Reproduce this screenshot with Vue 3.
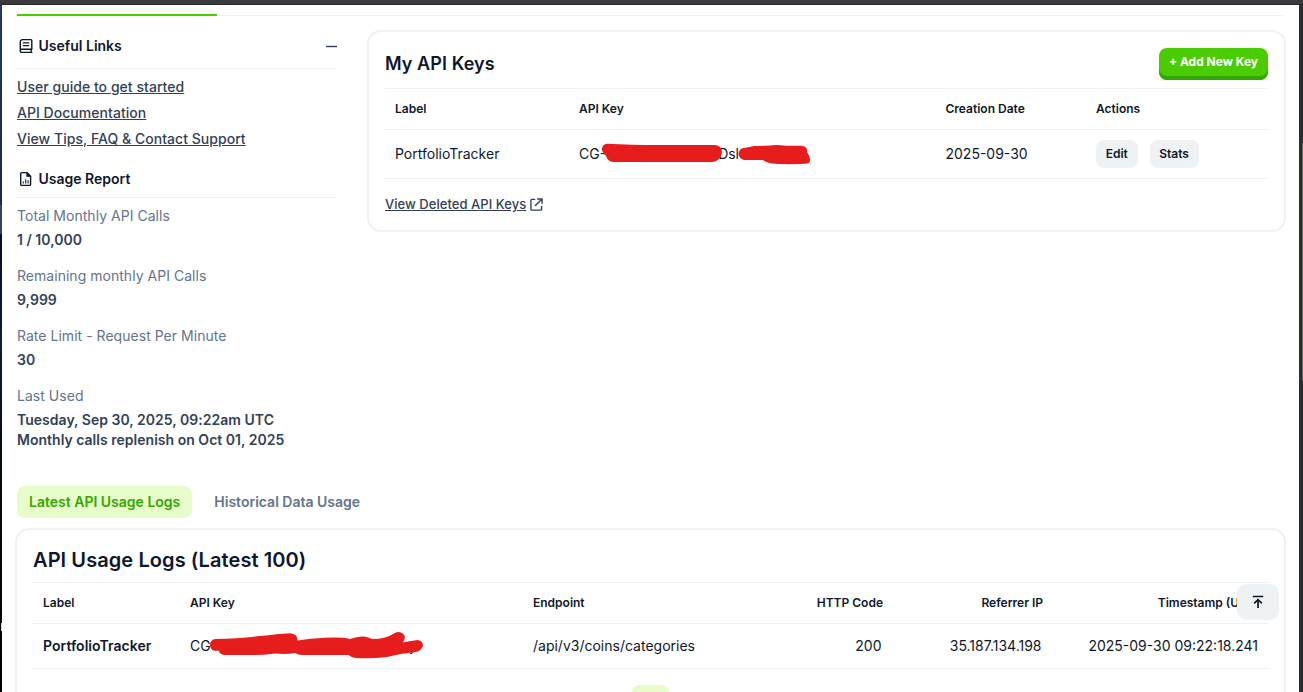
<script setup>
const links = ['User guide to get started', 'API Documentation', 'View Tips, FAQ & Contact Support']
const stats = [
  { label: 'Total Monthly API Calls', lines: ['1 / 10,000'] },
  { label: 'Remaining monthly API Calls', lines: ['9,999'] },
  { label: 'Rate Limit - Request Per Minute', lines: ['30'] },
  { label: 'Last Used', lines: ['Tuesday, Sep 30, 2025, 09:22am UTC', 'Monthly calls replenish on Oct 01, 2025'] },
]
</script>

<template>
  <div class="window">
    <div class="topbar"></div>
    <div class="edge-left"><i></i></div>
    <main class="page">
      <div class="progress"><div class="progress-fill"></div></div>

      <div class="upper">
        <aside class="side">
          <div class="side-head first">
            <svg class="ico" width="16" height="16" viewBox="0 0 16 16" fill="none" stroke="#0f172a" stroke-width="1.4" stroke-linecap="round" stroke-linejoin="round">
              <path d="M13.8 11.2V2.6a1 1 0 0 0-1-1H4.3a2 2 0 0 0-2 2v8.6M13.8 11.2H3.8a1.5 1.5 0 0 0 0 3.2h10M13.2 11.4v2.8M5.4 4.9h5.2M5.4 7.6h5.2" />
            </svg>
            <span>Useful Links</span>
            <svg class="minus" width="12" height="16" viewBox="0 0 12 16"><path d="M1 8.500h11" stroke="#334155" stroke-width="1.4" /></svg>
          </div>
          <nav class="links"><a v-for="l in links" :key="l">{{ l }}</a></nav>
          <div class="side-head second">
            <svg class="ico" width="16" height="16" viewBox="0 0 16 16" fill="none" stroke="#0f172a" stroke-width="1.4" stroke-linejoin="round">
              <path d="M8.9 1.6H3.7a1 1 0 0 0-1 1v10.8a1 1 0 0 0 1 1h7.9a1 1 0 0 0 1-1V5.3L8.9 1.6Z" />
              <path d="M8.7 1.6v3.9h3.9Z" fill="#0f172a" stroke-width=".6" />
              <path d="M5.3 12.500v-2M7.7 12.500V8.200M10.1 12.500V9.300" stroke-width="1.1" />
            </svg>
            <span>Usage Report</span>
          </div>
          <dl class="stats">
            <div v-for="s in stats" :key="s.label" class="stat">
              <dt>{{ s.label }}</dt>
              <dd v-for="t in s.lines" :key="t">{{ t }}</dd>
            </div>
          </dl>
        </aside>

        <section class="card keys">
          <header>
            <h2>My API Keys</h2>
            <button class="add">+ Add New Key</button>
          </header>
          <div class="row head keys-grid">
            <span>Label</span><span>API Key</span><span>Creation Date</span><span>Actions</span>
          </div>
          <div class="row body keys-grid">
            <span>PortfolioTracker</span>
            <span class="masked">CG-<b class="gap-a"></b>Dsl
              <svg class="scribble" width="260" height="50" viewBox="0 0 260 50" fill="#e71d1d">
                <path d="M37 13.7Q60 15 90 15H145Q152 15.500 152 23Q149 32 142 32H44Q38 32 36 26Q31 21 32 18Q33 14 37 13.700Z" />
                <path d="M174 18Q180 17 184 16Q190 16 200 15.600Q206 14.500 216 15.800H232Q238 17 237 22Q242 29 239 33Q236 34 230 34Q212 34.500 202 33.500Q195 32 193 30H174Q168 28 168.500 23Q170 18 174 18Z" />
              </svg>
            </span>
            <span>2025-09-30</span>
            <span class="actions"><button>Edit</button><button>Stats</button></span>
          </div>
          <div class="deleted">
            <a>View Deleted API Keys</a>
            <svg width="13" height="13" viewBox="0 0 14 14" fill="none" stroke="#334155" stroke-width="1.5" stroke-linecap="round" stroke-linejoin="round">
              <path d="M5 1.500H2Q1 1.500 1 2.500V12Q1 13 2 13H11.500Q12.500 13 12.500 12V9M8.200 1H13V5.800M13 1 5.800 8.200" />
            </svg>
          </div>
        </section>
      </div>

      <div class="tabs"><span class="tab on">Latest API Usage Logs</span><span class="tab">Historical Data Usage</span></div>

      <section class="card logs">
        <h2>API Usage Logs (Latest 100)</h2>
        <div class="row head logs-grid">
          <span>Label</span><span>API Key</span><span>Endpoint</span><span class="num">HTTP Code</span><span class="num">Referrer IP</span><span class="num">Timestamp (UTC)</span>
        </div>
        <div class="row body logs-grid">
          <span class="strong">PortfolioTracker</span>
          <span class="masked">CG<b class="gap-b"></b>y
            <svg class="scribble wide" width="260" height="50" viewBox="0 0 260 50" fill="#e71d1d">
              <path d="M35 19Q60 18.500 80 16Q98 14 110 13.200Q118 14 117.500 20.500Q130 18.500 145 17.800Q162 17 170 19Q178 16 184 16.500Q189 17 192 19Q206 19 213 14Q217 11 221 12.500Q226 15 224.500 19L223 22.500Q231 20.500 238 20Q243 21 243 26Q241 31 236 32Q222 33 207 37Q190 39 176 38Q170 37 169 35H122Q117 34.500 116 33Q105 34.500 95 33.500Q80 35.500 68 35H44Q39 34 39 30.800H34Q30 29 30 25Q30 20 35 19Z" />
            </svg>
          </span>
          <span>/api/v3/coins/categories</span><span class="num">200</span><span class="num">35.187.134.198</span><span class="num last">2025-09-30 09:22:18.241</span>
        </div>
        <div class="pager"></div>
      </section>
    </main>
    <div class="edge-right"></div>
    <button class="to-top" aria-label="Back to top">
      <svg width="14" height="16" viewBox="0 0 14 16" fill="none" stroke="#0f172a" stroke-width="1.7"><path d="M1.800 2.500h10.400M7 14V5.800M3.200 9.400l3.800-3.800 3.800 3.800" /></svg>
    </button>
  </div>
</template>

<style>
body { margin: 0; overflow: hidden; }
</style>
<style scoped>
* { box-sizing: border-box; }
.window {
  position: relative; width: 1303px; height: 692px; overflow: hidden; background: #fff;
  display: grid; grid-template: 5px 687px / 2px 1297px 4px;
  font-family: Inter, "Liberation Sans", sans-serif; font-size: 14px; line-height: 20px; color: #0f172a;
}
button { font: inherit; border: 0; margin: 0; padding: 0; color: inherit; }
.topbar { grid-column: 1 / 4; background: #3a393e; border-bottom: 1px solid #2b2a2e; }
.edge-left { padding-top: 618px; background: linear-gradient(#22376b, #192752 200px, #39435f 200px, #39435f 228px, #060d25 230px, #101a30 340px, #040d12 450px, #030704 600px, #000); }
.edge-left i { display: block; width: 1px; height: 8px; margin-left: 1px; background: #ddd; }
.edge-right { background: linear-gradient(#2b2c2e, #2b2c2e) 0 0 / 3px 100% no-repeat, linear-gradient(#2b2c2e 138px, #66676a 138px, #66676a 376px, #2b2c2e 376px); }
.page { padding: 9px 13px 0; overflow: hidden; }
.progress { height: 2px; margin: 0 2px; background: linear-gradient(transparent 1px, #f0f1f2 1px); }
.progress-fill { width: 200px; height: 2px; background: #4bcc00; }
.upper { display: flex; justify-content: space-between; height: 470px; }
.side { width: 320px; margin-left: 2px; }
.side-head { display: flex; align-items: center; border-bottom: 1px solid #eff2f5; font-weight: 600; }
.side-head.first { height: 53px; padding-top: 8px; }
.side-head.second { height: 30px; padding-bottom: 8px; }
.ico { margin: 0 4.5px 0 1px; flex: none; }
.minus { margin-left: auto; }
.links { display: flex; flex-direction: column; align-items: flex-start; gap: 6px; padding: 8px 0 19px; }
.links a, .deleted a { font-weight: 540; color: #334155; text-decoration: underline; letter-spacing: .04px; }
.deleted a { font-size: 13px; }
.stats { margin: 0; padding-top: 8px; display: flex; flex-direction: column; gap: 16px; }
dt { color: #64748b; margin-bottom: 4px; letter-spacing: .03px; }
dd { margin: 0; font-weight: 600; color: #334155; letter-spacing: .02px; }
.card { border: 2px solid #eff2f5; border-radius: 14px; padding: 0 16px; }
h2 { margin: 0; font-weight: 600; letter-spacing: .08px; }
.keys { width: 919px; height: 202px; margin-top: 14px; }
.keys header { display: flex; justify-content: space-between; height: 56px; padding-top: 16px; }
.keys h2 { font-size: 18px; line-height: 32px; }
.add { width: 109px; height: 32px; padding-bottom: 4px; border-radius: 8px; background: #4bcc00; box-shadow: inset 0 -4px #32a900; color: #fff; font-size: 12px; font-weight: 700; line-height: 28px; }
.row { display: grid; align-items: center; border-top: 1px solid #eff2f5; white-space: nowrap; }
.row.head { height: 41px; font-size: 12px; font-weight: 600; }
.row > span { padding-left: 10px; }
.row.body { border-bottom: 1px solid #eff2f5; }
.keys .body { height: 50px; }
.keys-grid { grid-template-columns: 184px 366.5px 150.5px 1fr; }
.actions { display: flex; gap: 12px; }
.actions button { height: 28px; padding: 0 9.7px; border-radius: 8px; background: #eff2f5; font-size: 12px; font-weight: 600; }
.masked { position: relative; }
.gap-a { display: inline-block; width: 112px; }
.gap-b { display: inline-block; width: 198px; }
.scribble { position: absolute; left: 1px; top: -14px; }
.scribble.wide { left: 0; top: -16px; }
.deleted { display: flex; align-items: center; gap: 4px; padding-top: 15px; }
.tabs { display: flex; gap: 10px; margin-left: 2px; }
.tab { height: 32px; padding: 6px 12px; border-radius: 8px; font-weight: 600; color: #64748b; }
.tab.on { background: #e8fcca; color: #32a900; }
.logs { width: 1271px; height: 220px; margin-top: 10px; }
.logs h2 { height: 52px; padding-top: 15px; font-size: 20px; line-height: 30px; }
.logs-grid { grid-template-columns: 147px 343px 207px 153px 160px 225px; }
.logs .body { height: 46px; }
.num { text-align: right; }
.row.head .num:last-child { padding-right: 8px; }
.last { padding-right: 10px; }
.body .num:not(.last) { padding-right: 1.5px; }
.strong { font-weight: 600; letter-spacing: .04px; }
.pager { width: 37px; height: 32px; margin: 16px auto 0; border-radius: 8px; background: #e8fcca; }
.to-top { position: absolute; left: 1237px; top: 584px; width: 42px; height: 36px; border-radius: 9px; background: #eff2f5; display: grid; place-items: center; }
</style>
